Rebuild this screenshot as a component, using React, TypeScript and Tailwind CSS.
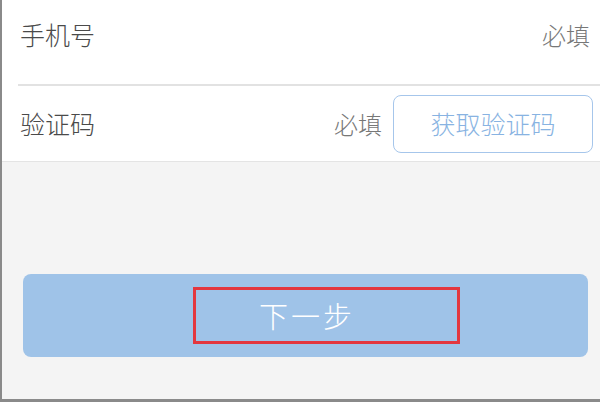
export default function App() {
  const font = { fontFamily: '"Noto Sans CJK SC", "Noto Sans", sans-serif' };
  return (
    <div
      style={font}
      className="w-[600px] h-[402px] bg-[#f4f4f4] border-l-[2px] border-b-[3px] border-[#8a8a8a] flex flex-col overflow-hidden font-light"
    >
      <div className="bg-white border-b border-[#e4e4e4]">
        <div className="h-[84px] pb-[14px] flex items-center justify-between pl-[18px] pr-[10px]">
          <span className="text-[25px] text-[#4a4a4a]">手机号</span>
          <span className="text-[24px] text-[#777]">必填</span>
        </div>
        <div className="ml-[16px] h-[2px] bg-[#e2e2e2]" />
        <div className="h-[75px] flex items-center pl-[18px] pr-[7px]">
          <span className="text-[25px] text-[#4a4a4a] flex-1">验证码</span>
          <span className="text-[24px] text-[#777] mr-[11px]">必填</span>
          <div className="w-[200px] h-[58px] rounded-[8px] border-[1.5px] border-[#a6c6eb] flex items-center justify-center text-[25px] text-[#88b3e2]">
            获取验证码
          </div>
        </div>
      </div>
      <div className="mt-[112px] ml-[21px] mr-[12px] h-[83px] rounded-[8px] bg-[#9fc3e8] relative flex items-center justify-center">
        <span className="text-[29px] text-white tracking-[3px] pl-[3px]">下一步</span>
        <div className="absolute left-[170px] top-[13px] w-[267px] h-[57px] border-[3px] border-[#e3373f]" />
      </div>
    </div>
  );
}
